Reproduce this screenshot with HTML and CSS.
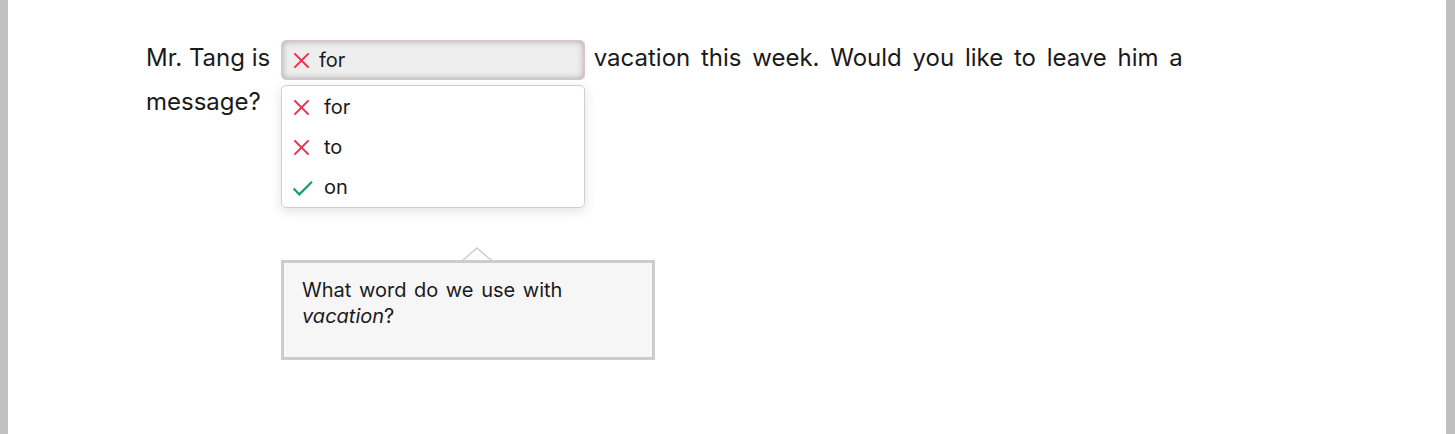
FILE: index.html
```html
<!DOCTYPE html>
<html lang="en">
<head>
<meta charset="utf-8">
<title>Exercise</title>
<link rel="stylesheet" href="styles.css">
</head>
<body>
<div class="frame">
  <div class="content">
    <p class="sentence"><span class="lead">Mr. Tang is </span><span class="select-wrap"><span class="select"><svg class="icon" viewBox="0 0 20 20"><path d="M2.5 2.5 L17.5 17.5 M17.5 2.5 L2.5 17.5" /></svg><span class="select-text">for</span></span><span class="dropdown">
        <span class="option"><svg class="icon" viewBox="0 0 20 20"><path d="M2.5 2.5 L17.5 17.5 M17.5 2.5 L2.5 17.5" /></svg><span>for</span></span>
        <span class="option"><svg class="icon" viewBox="0 0 20 20"><path d="M2.5 2.5 L17.5 17.5 M17.5 2.5 L2.5 17.5" /></svg><span>to</span></span>
        <span class="option"><svg class="icon check" viewBox="0 0 20 20"><path d="M1.5 11 L7 16.5 L19 4.5" /></svg><span>on</span></span>
      </span></span> vacation this week. Would you like to leave him a message?</p>
    <div class="hint">
      <p>What word do we use with <em>vacation</em>?</p>
    </div>
  </div>
</div>
</body>
</html>
```
FILE: styles.css
```css
html, body {
  margin: 0;
  padding: 0;
  background: #fff;
}
body {
  font-family: Inter, "Liberation Sans", sans-serif;
  color: #1a1a1c;
}
.frame {
  height: 434px;
  box-sizing: border-box;
  border-left: 8px solid #c0c0c0;
  border-right: 9px solid #bfbfbf;
}
.content {
  padding: 36px 0 0 138px;
  width: 1100px;
}
.sentence {
  margin: 0;
  font-size: 24px;
  line-height: 44px;
  word-spacing: 4px;
}
.lead {
  word-spacing: 0;
}
.select-wrap {
  position: relative;
  display: inline-block;
  vertical-align: top;
  margin-top: 4px;
  margin-left: 4px;
  margin-right: -2px;
  word-spacing: 0;
}
.select {
  display: flex;
  align-items: center;
  box-sizing: border-box;
  width: 304px;
  height: 40px;
  padding: 0 0 0 10px;
  border: 1px solid #e2c3c5;
  border-radius: 5px;
  background: #eeeeee;
  box-shadow: inset 0 0 7px rgba(0,0,0,0.32);
  font-size: 20px;
}
.icon {
  width: 19px;
  height: 19px;
  flex: none;
  fill: none;
  stroke: #f0304a;
  stroke-width: 2.2;
  stroke-linecap: butt;
}
.icon.check {
  width: 21px;
  height: 21px;
  stroke: #15a068;
}
.select-text {
  margin-left: 8px;
  line-height: 24px;
}
.dropdown {
  position: absolute;
  left: 0;
  top: 45px;
  box-sizing: border-box;
  width: 304px;
  display: flex;
  flex-direction: column;
  padding: 1px 0 0;
  background: #fff;
  border: 1px solid #cfcfcf;
  border-radius: 5px;
  box-shadow: 0 3px 12px rgba(0,0,0,0.12);
  z-index: 2;
}
.option {
  display: flex;
  align-items: center;
  height: 40px;
  padding: 0 0 0 10px;
  font-size: 20px;
  line-height: 24px;
}
.option span {
  margin-left: 13px;
}
.option .check + span {
  margin-left: 11px;
}
.hint {
  position: relative;
  margin: 136px 0 0 135px;
  width: 374px;
  box-sizing: border-box;
  height: 100px;
  border: 3px solid #cccccc;
  background: #f6f6f6;
  padding: 14px 18px;
}
.hint::before {
  content: "";
  position: absolute;
  left: 178px;
  top: -16px;
  width: 30px;
  height: 13px;
  background: #cccccc;
  clip-path: polygon(50% 0, 100% 100%, 0 100%);
}
.hint::after {
  content: "";
  position: absolute;
  left: 180px;
  top: -14px;
  width: 26px;
  height: 11px;
  background: #fdfdfd;
  clip-path: polygon(50% 0, 100% 100%, 0 100%);
}
.hint p {
  margin: 0;
  font-size: 20px;
  line-height: 26px;
  word-spacing: 2px;
}
```
